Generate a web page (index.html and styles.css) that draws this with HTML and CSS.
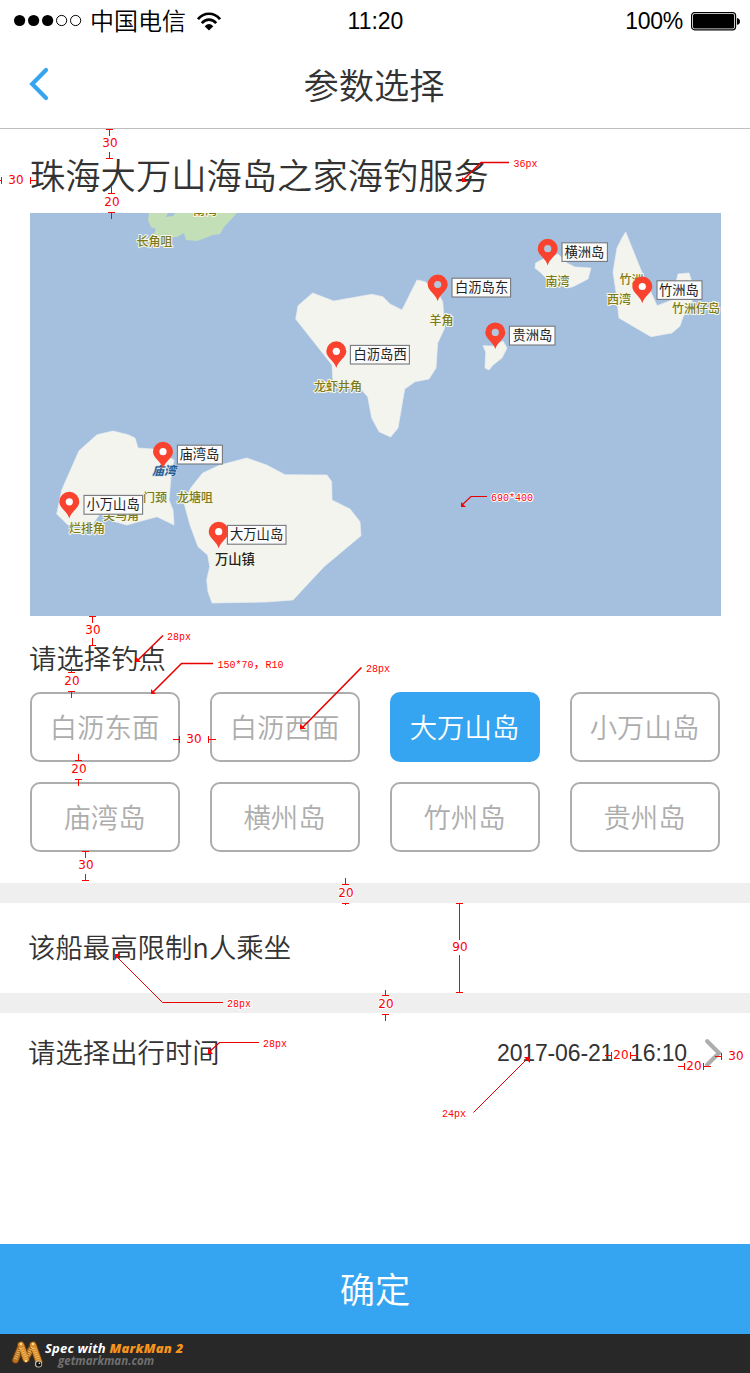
FILE: index.html
```html
<!DOCTYPE html>
<html lang="zh-CN">
<head>
<meta charset="utf-8">
<title>参数选择</title>
<link rel="stylesheet" href="styles.css">
</head>
<body>
<div class="page">
  <header class="status">
    <div class="carrier">
      <svg width="70" height="14" viewBox="0 0 70 14"><g fill="#000"><circle cx="5.6" cy="6.500" r="5.6"/><circle cx="19.6" cy="6.500" r="5.6"/><circle cx="33.6" cy="6.500" r="5.6"/></g><g fill="none" stroke="#000"><circle cx="47.6" cy="6.500" r="5.1"/><circle cx="61.6" cy="6.500" r="5.1"/></g></svg>
      <span class="operator">中国电信</span>
      <svg class="wifi" width="24" height="19" viewBox="0 0 24 19"><g fill="none" stroke="#000" stroke-width="2.7"><path d="M1 7.2C7-.1 17-.1 23 7.2"/><path d="M4.8 11.2C9 6.4 15 6.4 19.2 11.2"/></g><path d="M7.7 14.2Q12 10 16.3 14.2L12 18.4z"/></svg>
    </div>
    <span class="clock">11:20</span>
    <div class="power">
      <span>100%</span>
      <svg width="50" height="20" viewBox="0 0 50 20"><rect x="1.6" y="1.6" width="44" height="17.2" rx="3" fill="none" stroke="#000" stroke-width="1.2"/><rect x="3" y="3" width="41.2" height="14.4" rx="1.6"/><path d="M47 7q3 .6 3 3.4T47 13.8z"/></svg>
    </div>
  </header>

  <nav class="nav">
    <svg class="back" width="20" height="34" viewBox="0 0 20 34"><path d="M17 3L3.2 17 17 31" fill="none" stroke="#35a5f1" stroke-width="4.200" stroke-linecap="round"/></svg>
    <h1>参数选择</h1>
  </nav>

  <h2 class="title">珠海大万山海岛之家海钓服务</h2>

  <svg class="map" viewBox="30 213 691 403">
    <rect x="30" y="213" width="691" height="403" fill="#a5c0df"/>
    <path fill="#c2dfb8" d="M149 213L148 220 151 227 156 229 153 236 162 238 177 237 184 233 186 240 197 241 208 237 213 235 220 234 224 227 237 213H175L173 216 166 217 168 213z"/>
    <g fill="#f4f4ef" stroke="#e9eeee" stroke-width=".7">
      <path d="M312.7 293L333.7 301 371.7 294.3 383 296.7 390 304 402 310 417 280 425 281.7 438 293 442.7 301.7 444.7 328 437.7 343 436 368 429 379 415 381.7 404.7 389 398 428 390.7 437 379 431.7 371.7 418 367.7 396.7 360 388 333 381.7 332 365 295.7 319 298 305.7z"/>
      <path d="M535.7 263L543 259 558 254 567 263 575 267 591 268 588 279 573 286.7 567 288 548 280 540 272 535 268z"/>
      <path d="M483 345.7L493 346 503 341 507 348 502 358 493 365 489 370 485 368 485.7 352z"/>
      <path d="M625.7 232L641 270 657 305.7 672 300 678 274 689 273 692 282V302L683 317 680 326 672 333 651 336.7 619 318 616 292 613 272 617 248 622 238z"/>
      <path d="M113 431L128 434.7 135 438 138 448 153 449 174 460 171 477 169 500 173 510 174 525 157 516.7 126.7 525 115 521.7 100 514 92 525H68L56.7 514 61.7 490 79 450.7 97 434.7z"/>
      <path d="M246.7 458L266.7 465 285 474.7 327 475 331.7 481.7 332 500 350 509 360 521.7 361 535.7 324 566.7 293 600 266.7 602 212 603 208 591.7 206.7 580 209.7 566.7 207.7 555 198 546.7 190 525 184 503 190.7 488 202.7 473 220 465z"/>
    </g>
    <g class="place">
      <text x="193" y="215">南湾</text>
      <text x="136.5" y="246">长角咀</text>
      <text x="314" y="391">龙虾井角</text>
      <text x="429.5" y="325">羊角</text>
      <text x="545.5" y="286">南湾</text>
      <text x="619.5" y="284">竹洲</text>
      <text x="607" y="304">西湾</text>
      <text x="672" y="313">竹洲仔岛</text>
      <text x="143" y="502">门颈</text>
      <text x="177" y="502">龙塘咀</text>
      <text x="103" y="519.5">尖马角</text>
      <text x="69" y="533">烂排角</text>
      <text x="152" y="475" class="bay">庙湾</text>
      <text x="215" y="564" class="town">万山镇</text>
    </g>
    <defs><g id="pin"><path fill="#f9432f" d="M0 16.7C-1.8 9.5-10 6.5-10 0A10 10 0 0 1 10 0C10 6.5 1.8 9.5 0 16.7z"/></g></defs>
    <g>
      <use href="#pin" x="336.3" y="351.3"/><use href="#pin" x="437.7" y="284.5"/><use href="#pin" x="547.7" y="248.7"/><use href="#pin" x="495.3" y="332.4"/><use href="#pin" x="642.3" y="286.5"/><use href="#pin" x="163" y="451.7"/><use href="#pin" x="69.3" y="501.8"/><use href="#pin" x="218.7" y="531.7"/>
    </g>
    <g fill="#fff"><circle cx="336.3" cy="351.3" r="3.6"/><circle cx="642.3" cy="286.5" r="3.6"/><circle cx="163" cy="451.7" r="3.6"/><circle cx="69.3" cy="501.8" r="3.6"/><circle cx="218.7" cy="531.7" r="3.6"/></g>
    <g fill="#b3c6dd"><circle cx="437.7" cy="284.5" r="3.6"/><circle cx="547.7" cy="248.7" r="3.6"/><circle cx="495.3" cy="332.4" r="3.6"/></g>
    <g fill="#fbfbfb" stroke="#75797d" stroke-width="1.1">
      <rect x="350.4" y="345.4" width="59" height="18.6"/><rect x="452" y="278.2" width="58.6" height="18.8"/><rect x="562" y="242.8" width="45.4" height="18.6"/><rect x="657" y="280.8" width="45" height="18.6"/><rect x="509.4" y="326.2" width="45.6" height="18.8"/><rect x="177.4" y="445.2" width="45" height="18.8"/><rect x="84" y="495.4" width="58.6" height="18.8"/><rect x="227.4" y="525.4" width="58.6" height="18.8"/>
    </g>
    <g class="tag">
      <text x="353.500" y="359">白沥岛西</text><text x="455" y="292">白沥岛东</text><text x="564.500" y="256.500">横洲岛</text><text x="659" y="294.500">竹洲岛</text><text x="512.500" y="340">贵洲岛</text><text x="179.500" y="459">庙湾岛</text><text x="86.500" y="509">小万山岛</text><text x="230" y="539">大万山岛</text>
    </g>
  </svg>

  <section class="spots">
    <h3>请选择钓点</h3>
    <div class="grid">
      <button>白沥东面</button><button>白沥西面</button><button class="on">大万山岛</button><button>小万山岛</button>
      <button>庙湾岛</button><button>横州岛</button><button>竹州岛</button><button>贵州岛</button>
    </div>
  </section>

  <div class="row">该船最高限制n人乘坐</div>
  <div class="row">
    <span>请选择出行时间</span>
    <div class="when"><span>2017-06-21</span><span>16:10</span>
      <svg width="18" height="30" viewBox="0 0 18 30"><path d="M3.2 3.2L15 15 3.2 26.8" fill="none" stroke="#adadad" stroke-width="4.200" stroke-linecap="round"/></svg>
    </div>
  </div>

  <button class="confirm">确定</button>
  <footer class="brand">
    <svg width="32" height="32" viewBox="11 1338 32 32">
      <g fill="none" stroke-linecap="round"><path stroke="#714009" stroke-width="7.4" d="M15.5 1360L21 1346M33 1346L26 1358"/><path stroke="#b87322" stroke-width="5.6" d="M15.5 1360L21 1346M33 1346L26 1358"/><path stroke="#714009" stroke-width="7.6" d="M21 1345L26 1359M33 1345L39 1362"/><path stroke="#d98d2b" stroke-width="6" d="M21 1345L26 1359M33 1345L39 1362"/><path stroke="#f3c173" stroke-width="3.5" stroke-linecap="butt" stroke-dasharray=".8 1.4" d="M15.5 1359L20 1348M22 1348L26 1359M28 1356L32 1347M34 1348L38 1359"/></g>
      <g fill="#ffe3a0"><circle cx="21" cy="1344" r="1.2"/><circle cx="33" cy="1344" r="1.2"/><circle cx="26" cy="1361" r="1.2"/></g><circle cx="38.5" cy="1364" r="3.6" fill="#ccc5b4"/><circle cx="38.7" cy="1364" r="2.6" fill="#111"/><circle cx="39.4" cy="1363.2" r=".8" fill="#fff"/>
    </svg>
    <div><p class="spec">Spec with <b>MarkMan 2</b></p><p class="site">getmarkman.com</p></div>
  </footer>

  <svg class="marks" width="750" height="1373" viewBox="0 0 750 1373">
    <g fill="none" stroke="#f00" shape-rendering="crispEdges">
      <path d="M106 129.5h7M109.5 129v7M109.5 152v6M106 158.5h7"/>
      <path d="M0 180.5h2M1.5 177v7M30.5 177v7M30 180.5h8"/>
      <path d="M111.5 187v6M108 193.5h7M108 212.5h7M111.5 212v7"/>
      <path d="M89 616.5h7M92.5 616v7M92.5 638v7M89 645.5h7"/>
      <path d="M71.5 667v5M68 672.5h7M68 691.5h7M71.5 691v7"/>
      <path d="M78.5 754v7M75 760.5h7M75 779.5h7M78.5 779v7"/>
      <path d="M82 851.5h7M85.5 851v7M85.5 874v6M82 880.5h7"/>
      <path d="M173 739.5h6M179.5 736v7M208.5 736v7M208 739.5h8"/>
      <path d="M345.5 878v6M342 884.5h7M342 903.5h7M345.5 903v2"/>
      <path d="M456 903.5h7M459.5 903v37M459.5 955v37M456 992.5h7"/>
      <path d="M385.5 990v5M382 995.5h7M382 1014.5h7M385.5 1014v7"/>
      <path d="M605 1055.5h6M611.5 1052v7M630.5 1052v7M631 1055.5h7"/>
      <path d="M678 1066.5h6M684.5 1063v7M703.5 1063v7M704 1066.5h7"/>
      <path d="M715 1056.5h6M721.5 1053v7"/>
    </g>
    <g fill="none" stroke="#e60000" stroke-width="1.2">
      <path d="M509 162.5H481L463 180" stroke-width="1.5"/><path d="M487 496.5H471L462 505"/><path d="M163 635.5L137 661" stroke-width="1.5"/><path d="M213 663.5H181.500L153 692" stroke-width="1.5"/><path d="M361.500 667.500L302 728" stroke-width="1.600"/><path d="M223 1002.500H162.500L116 956" stroke-width="1"/><path d="M259 1042.500H219.500L208 1053"/><path d="M473.500 1112.500L528 1058" stroke-width="1"/>
    </g>
    <g fill="#f00"><path d="M462 177v5h5zM461 502v5h5zM136 657v5h5zM151 689v5h5zM300 724v5h6zM208 1048v6h5zM115 960v-6h5zM524 1057h6v6z"/></g>
    <g class="dim">
      <text x="110" y="147">30</text><text x="16" y="184">30</text><text x="112" y="206">20</text><text x="93" y="634">30</text><text x="72" y="685">20</text><text x="79" y="773">20</text><text x="86" y="869">30</text><text x="194" y="743">30</text><text x="346" y="897">20</text><text x="460" y="951">90</text><text x="386" y="1008">20</text><text x="621" y="1059">20</text><text x="694" y="1070">20</text><text x="736" y="1060">30</text>
    </g>
    <g class="note">
      <text x="513.500" y="167">36px</text><text x="491" y="501">690*400</text><text x="167" y="640">28px</text><text x="217.500" y="668">150*70<tspan class="comma">，</tspan>R10</text><text x="366" y="672">28px</text><text x="227" y="1007">28px</text><text x="263" y="1047">28px</text><text x="442" y="1117">24px</text>
    </g>
  </svg>
</div>
</body>
</html>
```
FILE: styles.css
```css
* { box-sizing: border-box; }
body, h1, h2, h3, p { margin: 0; font-weight: 350; }
button { padding: 0; font: inherit; }
svg { display: block; flex: none; }

body {
  background: #fff;
  color: #333;
  font-family: "Noto Sans CJK SC", sans-serif;
}

.page {
  position: relative;
  display: flex;
  flex-direction: column;
  width: 750px;
  height: 1373px;
  overflow: hidden;
}

.status {
  display: grid;
  grid-template-columns: 1fr auto 1fr;
  align-items: center;
  height: 40px;
  padding: 1px 10px 0 14px;
  color: #000;
  font: 23px/40px "Liberation Sans", sans-serif;
}
.carrier, .power { display: flex; align-items: center; }
.power { justify-content: flex-end; gap: 7px; letter-spacing: -.3px; }
.clock { padding-right: 3px; }
.operator {
  margin-left: 6px;
  font: 350 24px/36px "Noto Sans CJK SC", sans-serif;
  padding-bottom: 2px;
}
.wifi { margin-left: 11px; }

.nav {
  display: grid;
  grid-template-columns: 60px 1fr 60px;
  align-items: center;
  height: 89px;
  border-bottom: 1px solid #bfbfbf;
}
.back { margin-left: 29px; }
.nav h1 { padding-right: 2px; font-size: 35.3px; line-height: 86px; text-align: center; }

.title {
  height: 84px;
  padding: 3px 30px 0;
  font-size: 35.3px;
  line-height: 84px;
}
.map { width: 691px; height: 403px; margin-left: 30px; }
.place {
  font: 500 12px "Noto Sans CJK SC", sans-serif;
  fill: #7c7a1c;
  stroke: #f6f6e4;
  stroke-width: 2px;
  paint-order: stroke;
}
.place .bay { fill: #2a5f94; stroke: #c5d6e6; stroke-width: 1px; font-style: italic; font-weight: 700; }
.place .town { fill: #222; font-size: 13.3px; }
.tag { font: 13.3px "Noto Sans CJK SC", sans-serif; fill: #222; }

.spots { height: 267px; padding: 16px 30px 0; }
.spots h3 { margin-left: -1px; font-size: 27.4px; line-height: 51px; height: 60px; }
.grid {
  display: grid;
  grid-template-columns: repeat(4, 150px);
  grid-auto-rows: 70px;
  gap: 20px 30px;
}
.grid button {
  padding: 0 1px 3px 0;
  border: 2px solid #adadad;
  border-radius: 10px;
  background: #fff;
  color: #adadad;
  font-size: 27.4px;
  line-height: 60px;
}
.grid .on { border-color: #35a5f1; background: #35a5f1; color: #fff; }

.row {
  display: flex;
  justify-content: space-between;
  height: 110px;
  padding: 0 28px 0 28px;
  border-top: 20px solid #efefef;
  font-size: 27.4px;
  line-height: 87px;
}
.row + .row { line-height: 77px; }
.when {
  display: flex;
  align-items: center;
  gap: 17px;
  height: 80px;
  font: 23px/80px "Liberation Sans", sans-serif;
  letter-spacing: -.15px;
}

.confirm {
  height: 90px;
  margin-top: auto;
  padding-bottom: 3px;
  border: 0;
  background: #35a5f1;
  color: #fff;
  font-size: 35.3px;
  line-height: 87px;
}
.brand {
  display: flex;
  gap: 2px;
  height: 39px;
  padding: 4px 11px;
  background: #282828;
  font-family: "Open Sans", sans-serif;
  font-style: italic;
}
.spec { color: #fff; font-size: 13px; line-height: 20px; font-weight: 700; letter-spacing: .22px; }
.spec b { color: #f7941d; }
.site { padding-left: 13px; color: #707070; font-size: 11.5px; line-height: 6px; font-weight: 700; }

.marks { position: absolute; inset: 0; pointer-events: none; }
.dim, .note { fill: #f00; stroke: #fff; stroke-width: 2px; paint-order: stroke; }
.dim { font: 12px "DejaVu Sans", sans-serif; text-anchor: middle; }
.note { font: 10px "Liberation Mono", monospace; }
.comma { font: 12px "Noto Sans CJK SC", sans-serif; }
```
